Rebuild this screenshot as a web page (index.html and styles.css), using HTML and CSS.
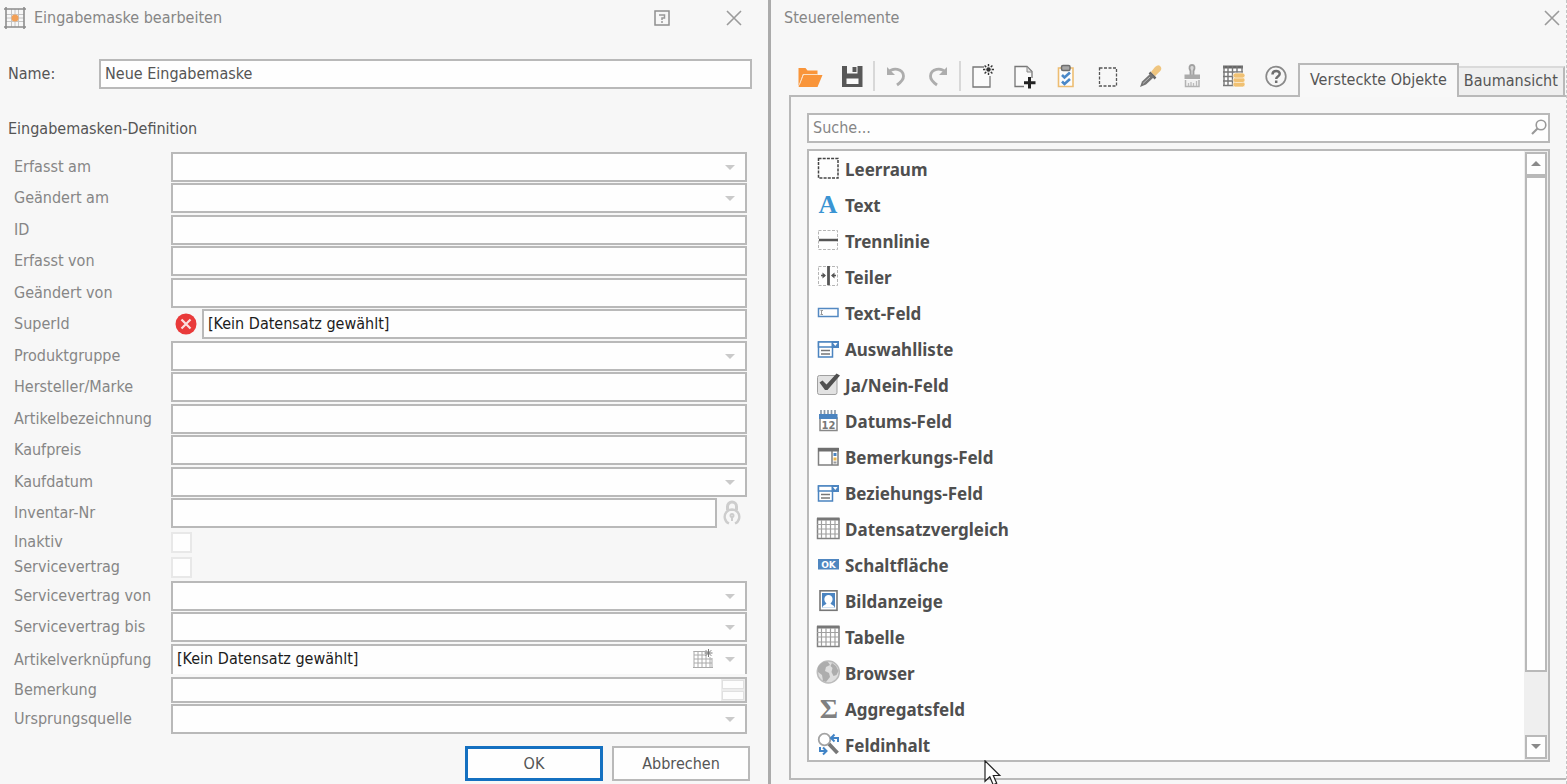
FILE: index.html
```html
<!DOCTYPE html>
<html lang="de">
<head>
<meta charset="utf-8">
<title>Eingabemaske bearbeiten</title>
<link rel="stylesheet" href="styles.css">
</head>
<body>
<div class="workspace">
  <form class="editor">
    <header class="titlebar">
      <svg class="app-icon" viewBox="0 0 22 22" width="22" height="22" aria-hidden="true">
        <path d="M7.500 2v18M14.500 2v18M2 7.500h18M2 14.500h18M11 2v5M11 15v5M2 11h5M15 11h5" stroke="#c4c4c4" fill="none"/>
        <path d="M2 0v22M20 0v22M0 2h22M0 20h22" stroke="#8c8c8c" stroke-width="1.600" fill="none"/>
        <circle cx="11" cy="11" r="3.500" fill="#f2a057"/>
      </svg>
      <h1 class="title">Eingabemaske bearbeiten</h1>
      <button type="button" class="win-button win-help" aria-label="Hilfe">
        <svg viewBox="0 0 16 16" width="16" height="16"><rect x="1" y="1" width="14" height="14" fill="none" stroke="#8f8f8f" stroke-width="1.500"/><path d="M5 5h5.500v3H8v2M8 11v2" fill="none" stroke="#999" stroke-width="1.500"/></svg>
      </button>
      <button type="button" class="win-button" aria-label="Schließen">
        <svg viewBox="0 0 16 16" width="16" height="16"><path d="M1 1l14 14M15 1L1 15" stroke="#9b9b9b" stroke-width="1.600"/></svg>
      </button>
    </header>

    <div class="name-row">
      <label for="name">Name:</label>
      <input class="box name-box" id="name" type="text" value="Neue Eingabemaske">
    </div>

    <h2 class="section">Eingabemasken-Definition</h2>

    <div class="fields">
      <div class="row"><label for="f1">Erfasst am</label><span class="drop"><select class="box" id="f1"><option></option></select></span></div>
      <div class="row"><label for="f2">Geändert am</label><span class="drop"><select class="box" id="f2"><option></option></select></span></div>
      <div class="row"><label for="f3">ID</label><input class="box" id="f3" type="text"></div>
      <div class="row"><label for="f4">Erfasst von</label><input class="box" id="f4" type="text"></div>
      <div class="row"><label for="f5">Geändert von</label><input class="box" id="f5" type="text"></div>
      <div class="row"><label for="f6">SuperId</label>
        <svg class="error-icon" viewBox="0 0 22 22" width="22" height="22" aria-hidden="true"><circle cx="11" cy="11" r="10.500" fill="#e93a3a"/><path d="M6.500 6.500l9 9M15.500 6.500l-9 9" stroke="#fbdede" stroke-width="2.200"/></svg>
        <input class="box" id="f6" type="text" value="[Kein Datensatz gewählt]"></div>
      <div class="row"><label for="f7">Produktgruppe</label><span class="drop"><select class="box" id="f7"><option></option></select></span></div>
      <div class="row"><label for="f8">Hersteller/Marke</label><input class="box" id="f8" type="text"></div>
      <div class="row"><label for="f9">Artikelbezeichnung</label><input class="box" id="f9" type="text"></div>
      <div class="row"><label for="f10">Kaufpreis</label><input class="box" id="f10" type="text"></div>
      <div class="row"><label for="f11">Kaufdatum</label><span class="drop"><select class="box" id="f11"><option></option></select></span></div>
      <div class="row"><label for="f12">Inventar-Nr</label><input class="box" id="f12" type="text">
        <svg class="lock-icon" viewBox="0 0 18 26" width="18" height="26" aria-hidden="true"><g fill="none" stroke="#cdcdcd"><path d="M4.500 10V6.500a4.500 4.500 0 0 1 9 0V10" stroke-width="3"/><path d="M6 23.500A7.300 7.300 0 1 1 12 23.500" stroke-width="2.400"/><path d="M4 10h10" stroke-width="2"/><path d="M9 16v5" stroke-width="2"/><circle cx="9" cy="15.500" r="1.500" stroke-width="2"/></g></svg>
      </div>
      <div class="row row-check"><label for="f13">Inaktiv</label><input class="check" id="f13" type="checkbox"></div>
      <div class="row row-check"><label for="f14">Servicevertrag</label><input class="check" id="f14" type="checkbox"></div>
      <div class="row"><label for="f15">Servicevertrag von</label><span class="drop"><select class="box" id="f15"><option></option></select></span></div>
      <div class="row"><label for="f16">Servicevertrag bis</label><span class="drop"><select class="box" id="f16"><option></option></select></span></div>
      <div class="row row-link"><label for="f17">Artikelverknüpfung</label><span class="drop"><select class="box box-open" id="f17"><option>[Kein Datensatz gewählt]</option></select>
        <svg class="pick-icon" viewBox="0 0 20 20" width="20" height="20" aria-hidden="true"><rect x="1" y="3" width="18" height="15" fill="#fff"/><path d="M.5 2.500h13M1 2v16M5 3v15M9 3v15M13 3v15M17 8v10M19 9v10M1 6h12M1 10h18M1 14h18M0 18.500h20" stroke="#aaa" fill="none"/><path d="M15.500 0v8M11.500 4h8M12.700 1.200l5.600 5.600M18.300 1.200l-5.600 5.600" stroke="#777"/></svg></span></div>
      <div class="row row-note"><label for="f18">Bemerkung</label><span class="note"><textarea class="box" id="f18" rows="1"></textarea><span class="spin"><button type="button" aria-label="Nach oben"></button><button type="button" aria-label="Nach unten"></button></span></span></div>
      <div class="row"><label for="f19">Ursprungsquelle</label><span class="drop"><select class="box" id="f19"><option></option></select></span></div>
    </div>

    <footer class="actions">
      <button type="button" class="action action-ok">OK</button>
      <button type="button" class="action">Abbrechen</button>
    </footer>
  </form>

  <section class="controls">
    <header class="titlebar titlebar-right">
      <h1 class="title">Steuerelemente</h1>
      <button type="button" class="win-button" aria-label="Schließen">
        <svg viewBox="0 0 16 16" width="16" height="16"><path d="M1 1l14 14M15 1L1 15" stroke="#9b9b9b" stroke-width="1.600"/></svg>
      </button>
    </header>

    <div class="toolbar">
      <button type="button" class="tool" aria-label="Öffnen"><svg viewBox="0 0 24 24"><path d="M.5 22V4h7l2 2.500h10V10H5L1.500 20z" fill="#f9953a"/><path d="M5.500 11h19L19.500 23H.5z" fill="#f9953a"/><path d="M1.500 20.500L5.300 10.500H20" fill="none" stroke="#fbe0c4"/></svg></button>
      <button type="button" class="tool" aria-label="Speichern"><svg viewBox="0 0 24 24"><path d="M2 2h20.500v21H2z" fill="#585858"/><path d="M7 2h10.500v7.500H7z" fill="#f7f7f7"/><path d="M12.500 3h4v5h-4z" fill="#585858"/><path d="M6.500 14.500h12V20h-12z" fill="#fbfbfb"/></svg></button>
      <span class="divider"></span>
      <button type="button" class="tool" aria-label="Rückgängig"><svg viewBox="0 0 24 24"><path d="M4 8.500C9 3 19 4.500 19.500 12c.2 4-3 6.500-6.500 9" fill="none" stroke="#adadad" stroke-width="2.800"/><path d="M3 3v8h8z" fill="#adadad"/></svg></button>
      <button type="button" class="tool" aria-label="Wiederholen"><svg viewBox="0 0 24 24"><path d="M20 8.500C15 3 5 4.500 4.500 12c-.2 4 3 6.500 6.500 9" fill="none" stroke="#adadad" stroke-width="2.800"/><path d="M21 3v8h-8z" fill="#adadad"/></svg></button>
      <span class="divider"></span>
      <button type="button" class="tool" aria-label="Neu"><svg viewBox="0 0 24 24"><path d="M14 3H3v20h17V12" fill="#fbfbfb" stroke="#777" stroke-width="1.300"/><path d="M18.500 0v11M13 5.500h11M14.600 1.600l7.800 7.800M22.400 1.600l-7.800 7.800" stroke="#333" stroke-width="1.400"/><circle cx="18.500" cy="5.500" r="3.200" fill="#f7f7f7"/><circle cx="18.500" cy="5.500" r="2.200" fill="#333"/></svg></button>
      <button type="button" class="tool" aria-label="Hinzufügen"><svg viewBox="0 0 24 24"><path d="M12 22.500H3V2.500h12l5 5V14" fill="#fbfbfb" stroke="#777" stroke-width="1.300"/><path d="M15 2.500V8h5z" fill="#e0e0e0" stroke="#888"/><path d="M17.500 13v11.500M12 18.700h11.500" stroke="#222" stroke-width="3"/></svg></button>
      <button type="button" class="tool" aria-label="Aufgaben"><svg viewBox="0 0 24 24"><path d="M7 4H4.500v18.500h14.500V4H16" fill="#fcfcfc" stroke="#edbd72" stroke-width="1.600"/><rect x="7.500" y="1.500" width="8.500" height="5" rx="1.500" fill="#a7a7a7" stroke="#6e6e6e" stroke-width="1.500"/><path d="M8 11l2.500 2.500 5.500-5M8 17.500l2.500 2.500 5.500-5" fill="none" stroke="#4a88c8" stroke-width="2.600"/></svg></button>
      <button type="button" class="tool" aria-label="Auswahl"><svg viewBox="0 0 24 24"><rect x="3.500" y="4" width="17" height="18" fill="none" stroke="#555" stroke-width="1.300" stroke-dasharray="3 1.500"/></svg></button>
      <button type="button" class="tool" aria-label="Pipette"><svg viewBox="0 0 24 24"><path d="M13 8l4-5q4-3.500 6 .2 1.200 2.500-2 5l-4 4z" fill="#efc57f"/><path d="M11.500 8.500l6 6" stroke="#666" stroke-width="2.500"/><path d="M12.500 9.500l3.500 3.500-8 7.500-6 2.500 2-5.500z" fill="#757575"/><path d="M12 13l-7 6.500" stroke="#bbb"/></svg></button>
      <button type="button" class="tool" aria-label="Format übertragen"><svg viewBox="0 0 24 24"><path d="M10.500 11V7C8.500 3.500 9.500 1 12 1s3.500 2.500 1.500 6v4" fill="#d8d8d8" stroke="#a0a0a0" stroke-width="1.800"/><path d="M4.500 10.500h15.500V15H4.500z" fill="#ababab"/><path d="M5.500 16v6.500H19V16" fill="#f2f2f2" stroke="#b3b3b3" stroke-width="1.500"/><path d="M8.500 19v3M11 18v4M13.500 19v3M16.500 17v5" stroke="#bbb" stroke-width="1.300"/></svg></button>
      <button type="button" class="tool" aria-label="Tabellendaten"><svg viewBox="0 0 24 24"><path d="M1 2h20v20H1z" fill="#fff"/><path d="M1 3h20" stroke="#666" stroke-width="3"/><path d="M2 2v20M6 2v20M10.500 2v20M15 2v20M20 2v10M1 8h20M1 12.500h12M1 17h12M1 21.500h12" stroke="#777" stroke-width="1.400"/><g fill="#f0c173" stroke="#fff" stroke-width=".6"><rect x="11" y="17.500" width="12" height="5.500" rx="2.500"/><rect x="11" y="13.500" width="12" height="5" rx="2.500"/><rect x="11" y="9" width="12" height="5" rx="2.500"/></g></svg></button>
      <button type="button" class="tool" aria-label="Hilfe"><svg viewBox="0 0 24 24"><circle cx="12" cy="12.500" r="9.800" fill="none" stroke="#8a8a8a" stroke-width="1.700"/><path d="M8.500 10.500c0-5 7.500-4.500 7.200-.5-.2 2.500-3.500 2.500-3.500 5M12.200 16.500v2.500" fill="none" stroke="#6f6f6f" stroke-width="2.500"/></svg></button>
      <div class="tabs" role="tablist">
        <button type="button" class="tab tab-active" role="tab" aria-selected="true">Versteckte Objekte</button>
        <button type="button" class="tab" role="tab" aria-selected="false">Baumansicht</button>
      </div>
    </div>

    <div class="panel">
      <div class="search">
        <input class="box search-box" type="search" placeholder="Suche..." aria-label="Suche">
        <svg class="search-icon" viewBox="0 0 16 16" width="16" height="16" aria-hidden="true"><circle cx="10" cy="6" r="4.800" fill="none" stroke="#999" stroke-width="1.600"/><path d="M6.500 9.500L1 15" stroke="#999" stroke-width="2.200"/></svg>
      </div>
      <div class="list-box">
        <ul class="list">
          <li class="item"><svg viewBox="0 0 24 24"><rect x="2.500" y="2.500" width="19.500" height="19.500" fill="none" stroke="#444" stroke-width="1.500" stroke-dasharray="3 1.200"/></svg>Leerraum</li>
          <li class="item"><svg viewBox="0 0 24 24"><text class="glyph-a" x="12" y="20.500" text-anchor="middle">A</text></svg>Text</li>
          <li class="item"><svg viewBox="0 0 24 24"><rect x="2.500" y="2.500" width="19" height="19" fill="none" stroke="#b5b5b5" stroke-dasharray="3 1.500"/><path d="M3 12h19" stroke="#555" stroke-width="2.500"/></svg>Trennlinie</li>
          <li class="item"><svg viewBox="0 0 24 24"><rect x="2.500" y="2.500" width="19" height="19" fill="none" stroke="#b5b5b5" stroke-dasharray="3 1.500"/><path d="M12.500 2v19" stroke="#555" stroke-width="2.800"/><path d="M5 11.500h4M16 11.500h4" stroke="#555" stroke-width="1.500"/><path d="M6.500 8.500l3.500 3-3.500 3zM18.500 8.500l-3.500 3 3.500 3z" fill="#555"/></svg>Teiler</li>
          <li class="item"><svg viewBox="0 0 24 24"><rect x="2.500" y="8.500" width="19.500" height="8" fill="#fff" stroke="#5389c2" stroke-width="1.500"/><path d="M4.500 10.500H7M4.500 14.500H7M5.500 10.500v4" stroke="#999"/></svg>Text-Feld</li>
          <li class="item"><svg viewBox="0 0 24 24"><path d="M2.500 6h14v15h-14z" fill="#fff" stroke="#4b84c0" stroke-width="1.500"/><path d="M2.500 11h19V6h-19z" fill="#fff" stroke="#4b84c0" stroke-width="1.500"/><path d="M15.500 5H23v7h-7.500z" fill="#4b84c0"/><path d="M17 7h4.500l-2.200 3z" fill="#fff"/><path d="M5 14.500h9M5 18h9" stroke="#777" stroke-width="1.500"/></svg>Auswahlliste</li>
          <li class="item"><svg viewBox="0 0 24 24"><rect x="1.500" y="3.500" width="19.500" height="19" rx="2" fill="#e2e2e2" stroke="#a0a0a0"/><path d="M3.500 10.500l3-2 4 4L20.500 1.500l3.500 2L11.500 18H9z" fill="#505050"/></svg>Ja/Nein-Feld</li>
          <li class="item"><svg viewBox="0 0 24 24"><path d="M4 10h17v12.500H4z" fill="#fff" stroke="#888" stroke-width="1.500"/><path d="M3 6h18.500v5H3z" fill="#4b84c0"/><path d="M5 2v4M8.500 2v4M12 2v4M15.500 2v4M19 2v4" stroke="#8d9aa8" stroke-width="1.700"/><text class="glyph-day" x="12.500" y="20.500" text-anchor="middle">12</text></svg>Datums-Feld</li>
          <li class="item"><svg viewBox="0 0 24 24"><path d="M2.500 4.500h19.500V21H2.500zM16 6v15" fill="#fff" stroke="#808080" stroke-width="1.500"/><path d="M2 4h21v3.500H2z" fill="#6f6f6f"/><path d="M19 9v3" stroke="#4b84c0" stroke-width="3"/><path d="M19 13.500v3" stroke="#e9b44c" stroke-width="3"/><path d="M19 17.500v2" stroke="#999" stroke-width="3"/></svg>Bemerkungs-Feld</li>
          <li class="item"><svg viewBox="0 0 24 24"><path d="M2.500 6h14v15h-14z" fill="#fff" stroke="#4b84c0" stroke-width="1.500"/><path d="M2.500 11h19V6h-19z" fill="#fff" stroke="#4b84c0" stroke-width="1.500"/><path d="M15.500 5H23v7h-7.500z" fill="#4b84c0"/><path d="M17 7h4.500l-2.200 3z" fill="#fff"/><path d="M5 14.500h9M5 18h9" stroke="#777" stroke-width="1.500"/></svg>Beziehungs-Feld</li>
          <li class="item"><svg viewBox="0 0 24 24"><path d="M1.500 3h21.500v19.500H1.500z" fill="#fff" stroke="#828282" stroke-width="1.500"/><path d="M1 3h22.500" stroke="#777" stroke-width="3"/><path d="M5.500 4v18M10 4v18M14.500 4v18M19 4v18M1 8.500h22M1 13h22M1 18h22" stroke="#a0a0a0" stroke-width="1.200"/></svg>Datensatzvergleich</li>
          <li class="item"><svg viewBox="0 0 24 24"><rect x="2" y="7" width="21" height="10.500" fill="#4f86c0"/><text class="glyph-ok" x="12.500" y="15.500" text-anchor="middle">OK</text></svg>Schaltfläche</li>
          <li class="item"><svg viewBox="0 0 24 24"><rect x="4" y="2.800" width="17" height="19.500" fill="#fff" stroke="#777" stroke-width="1.600"/><path d="M6 5h13v14.500H6z" fill="#4b84c0"/><path d="M6.500 19.500c.5-3 3-2 4-4-3.500-3-2.500-8.500 2-8.500s5.500 5.500 2 8.500c1 2 3.500 1 4 4z" fill="#fff"/></svg>Bildanzeige</li>
          <li class="item"><svg viewBox="0 0 24 24"><path d="M1.500 3h21.500v19.500H1.500z" fill="#fff" stroke="#828282" stroke-width="1.500"/><path d="M1 3h22.500" stroke="#777" stroke-width="3"/><path d="M5.500 4v18M10 4v18M14.500 4v18M19 4v18M1 8.500h22M1 13h22M1 18h22" stroke="#a0a0a0" stroke-width="1.200"/></svg>Tabelle</li>
          <li class="item"><svg viewBox="0 0 24 24"><circle cx="12.300" cy="12" r="11" fill="#dedede" stroke="#bbb" stroke-width="1.500"/><path d="M2 7q4-6 10-5l2 3-4 2-1 4 4 2 1 4-4 5-3-1-1-6-4-3zM16 3l4 3 2.500 5-2 4-3 1-2-4 1-4-2-2z" fill="#adadad"/></svg>Browser</li>
          <li class="item"><svg viewBox="0 0 24 24"><text class="glyph-sum" x="13" y="21.500" text-anchor="middle">Σ</text></svg>Aggregatsfeld</li>
          <li class="item"><svg viewBox="0 0 24 24"><circle cx="8.500" cy="7.500" r="5.800" fill="#fff" stroke="#a3a3a3" stroke-width="1.800"/><path d="M13 12l8.500 9" stroke="#777" stroke-width="3.800"/><path d="M22 10V6h-6M18.500 2.500L15 6l3.500 3.500M4 15v4h6M7 15.500l3.500 3.500L7 22.500" fill="none" stroke="#4083c6" stroke-width="2"/></svg>Feldinhalt</li>
        </ul>
        <div class="scrollbar">
          <button type="button" class="scroll-button scroll-up" aria-label="Nach oben"></button>
          <div class="scroll-thumb"></div>
          <div class="scroll-rest"></div>
          <button type="button" class="scroll-button scroll-down" aria-label="Nach unten"></button>
        </div>
      </div>
    </div>
    <svg class="pointer" viewBox="0 0 20 26" width="20" height="26" aria-hidden="true"><path d="M1 .8v20.500l4.800-4.500 3.400 8 3.500-1.500-3.400-7.800h6.500z" fill="#fff" stroke="#222" stroke-width="1.200"/></svg>
  </section>
</div>
</body>
</html>
```

FILE: styles.css
```css
* {
  box-sizing: border-box;
}

body {
  margin: 0;
  background: #f7f7f7;
  color: #555;
  font-family: "DejaVu Sans Condensed", "DejaVu Sans", sans-serif;
  font-size: 16px;
  line-height: 20px;
}

h1,
h2 {
  margin: 0;
  font-size: inherit;
  font-weight: 400;
}

button,
input,
select,
textarea {
  margin: 0;
  border-radius: 0;
  color: inherit;
  font: inherit;
}

.workspace {
  display: grid;
  grid-template-columns: minmax(0, 771fr) minmax(0, 796fr);
  height: 100vh;
  min-height: 784px;
  overflow: hidden;
}

.editor {
  padding: 0 16px 0 8px;
  border-right: 3px solid #ababab;
}

.titlebar {
  display: flex;
  align-items: center;
  height: 36px;
  margin-left: -4px;
  padding-right: 10px;
  color: #868686;
}

.app-icon {
  margin-right: 8px;
}

.title {
  flex: 1;
}

.win-button {
  display: flex;
  padding: 0;
  border: 0;
  background: none;
}

.win-help {
  margin-right: 56px;
}

.name-row {
  display: flex;
  align-items: center;
  margin-top: 23px;
}

.name-row label {
  width: 91px;
}

.box {
  flex: 1;
  width: 100%;
  min-width: 0;
  height: 30px;
  padding: 0 4px 2px;
  border: 2px solid #b9b9b9;
  outline: 0;
  background: #fefefe;
}

.section {
  margin: 30px 0 13px;
}

.fields {
  padding: 0 5px 0 6px;
}

.row {
  display: flex;
  height: 31px;
  color: #1c1c1c;
}

.row:nth-child(even) {
  height: 32px;
}

.row label {
  width: 157px;
  color: #868686;
  line-height: 30px;
  white-space: nowrap;
}

.drop,
.note {
  position: relative;
  display: flex;
  flex: 1;
}

.drop .box {
  appearance: none;
}

.drop::after {
  position: absolute;
  top: 13px;
  right: 12px;
  border: 5px solid transparent;
  border-top-color: #cacaca;
  border-bottom: 0;
  content: "";
}

.error-icon {
  margin: 4px 5px 0 4px;
}

.lock-icon {
  margin: 2px 6px 0;
}

.row.row-check {
  height: 25px;
}

.row.row-check:nth-child(even) {
  height: 26px;
}

.row-check label {
  line-height: 24px;
}

.check {
  width: 21px;
  height: 21px;
  margin-top: 2px;
  border: 2px solid #e8e8e8;
  background: #fefefe;
  appearance: none;
}

.row.row-link {
  height: 33px;
}

.row-link label {
  line-height: 32px;
}

.box-open {
  border-bottom: 0;
}

.pick-icon {
  position: absolute;
  top: 5px;
  right: 34px;
}

.row.row-note {
  height: 27px;
}

.row-note label {
  line-height: 26px;
}

.note .box {
  height: 26px;
  resize: none;
}

.spin {
  position: absolute;
  top: 2px;
  right: 2px;
  display: grid;
  gap: 2px;
  width: 24px;
  height: 22px;
  padding: 1px;
  background: #ececec;
}

.spin button {
  padding: 0;
  border: 1px solid #e0e0e0;
  background: #fdfdfd;
}

.actions {
  display: flex;
  gap: 9px;
  justify-content: flex-end;
  padding-right: 2px;
  margin-top: 11px;
}

.action {
  width: 138px;
  height: 35px;
  border: 2px solid #b9b9b9;
  background: #fefefe;
}

.action-ok {
  border: 3px solid #1470c0;
}

.controls {
  position: relative;
  display: flex;
  flex-direction: column;
  min-height: 0;
  padding: 0 0 4px 18px;
  border-right: 1px dashed #c4c4c4;
}

.titlebar-right {
  margin-left: -5px;
  padding-right: 6px;
}

.toolbar {
  display: flex;
  align-items: flex-end;
  height: 61px;
  margin-bottom: -2px;
}

.tool {
  flex: 0 1 42px;
  height: 42px;
  padding: 0;
  border: 0;
  background: none;
}

.tool svg {
  display: block;
  width: 24px;
  height: 24px;
  margin: 0 auto;
  overflow: visible;
}

.divider {
  width: 2px;
  height: 30px;
  margin-bottom: 6px;
  background: #d8d8d8;
}

.tabs {
  z-index: 1;
  display: flex;
  align-items: flex-end;
  margin-left: 1px;
}

.tab {
  height: 31px;
  padding: 0 5px 2px;
  border: 2px solid #b9b9b9;
  border-top-color: #dadada;
  border-left: 0;
  background: #efefef;
  white-space: nowrap;
}

.tab-active {
  height: 34px;
  padding: 0 10px 2px;
  border: 2px solid #b9b9b9;
  border-bottom: 0;
  background: #f8f8f8;
}

.panel {
  display: flex;
  flex: 1;
  flex-direction: column;
  min-height: 0;
  padding: 16px;
  border: 2px solid #b9b9b9;
  border-right: 0;
}

.search {
  position: relative;
  display: flex;
}

.search-box {
  appearance: none;
}

.search-box::placeholder {
  color: #868686;
  opacity: 1;
}

.search-icon {
  position: absolute;
  top: 6px;
  right: 3px;
}

.list-box {
  display: flex;
  flex: 1;
  min-height: 0;
  margin-top: 6px;
  border: 2px solid #b9b9b9;
  background: #fefefe;
}

.list {
  flex: 1;
  margin: 0;
  padding: 0 0 0 7px;
  overflow: hidden;
  list-style: none;
}

.item {
  display: flex;
  gap: 5px;
  height: 36px;
  padding-top: 5px;
  color: #4f4f4f;
  font-family: "Noto Sans", "Open Sans", sans-serif;
  font-size: 17px;
  font-weight: 700;
  line-height: 27px;
}

.item svg {
  width: 24px;
  height: 24px;
  overflow: visible;
}

.glyph-a {
  fill: #3a94d3;
  font: 700 26px "Liberation Serif", serif;
}

.glyph-day {
  fill: #777;
  font: 700 10px "DejaVu Sans", sans-serif;
}

.glyph-ok {
  fill: #fff;
  font: 700 9px "DejaVu Sans", sans-serif;
}

.glyph-sum {
  fill: #808080;
  font: 700 28px "Liberation Serif", serif;
}

.scrollbar {
  display: flex;
  flex-direction: column;
  width: 24px;
  padding: 1px;
  background: #efefef;
}

.scroll-button {
  position: relative;
  height: 24px;
  padding: 0;
  border: 2px solid #b9b9b9;
  background: #fefefe;
}

.scroll-button::after {
  position: absolute;
  top: 7px;
  left: 4px;
  border: 5px solid transparent;
  content: "";
}

.scroll-up::after {
  border-top: 0;
  border-bottom-color: #8a8a8a;
}

.scroll-down::after {
  border-top-color: #8a8a8a;
  border-bottom: 0;
}

.scroll-thumb {
  flex: 496;
  border: 2px solid #b9b9b9;
  background: #fefefe;
}

.scroll-rest {
  flex: 64;
}

.pointer {
  position: absolute;
  bottom: -2px;
  left: 213px;
}
```
